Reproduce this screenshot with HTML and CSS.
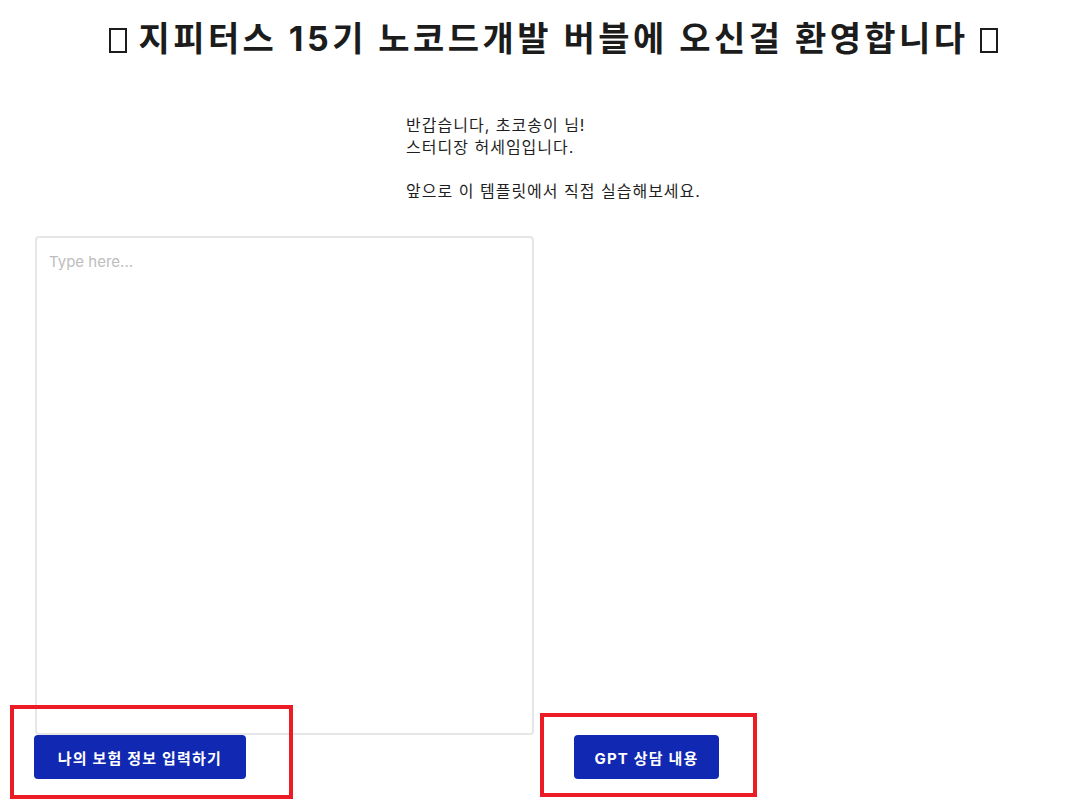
FILE: index.html
```html
<!DOCTYPE html>
<html lang="ko">
<head>
<meta charset="utf-8">
<link rel="stylesheet" href="styles.css">
</head>
<body>
<div class="page">
  <h1 class="title"><span class="tofu"></span> 지피터스 15기 노코드개발 버블에 오신걸 환영합니다 <span class="tofu"></span></h1>
  <div class="intro">
    <p>반갑습니다, 초코송이 님!<br>스터디장 허세임입니다.<br><br>앞으로 이 템플릿에서 직접 실습해보세요.</p>
  </div>
  <div class="work">
    <div class="left">
      <textarea class="input" placeholder="Type here..."></textarea>
      <div class="btn-wrap">
        <button class="btn">나의 보험 정보 입력하기</button>
        <span class="mark mark-left"></span>
      </div>
    </div>
    <div class="right">
      <div class="btn-wrap">
        <button class="btn btn-gpt">GPT 상담 내용</button>
        <span class="mark mark-right"></span>
      </div>
    </div>
  </div>
</div>
</body>
</html>
```
FILE: styles.css
```css
* { box-sizing: border-box; }
html, body { margin: 0; padding: 0; background: #fff; }
body {
  font-family: "Inter", "Noto Sans CJK KR", sans-serif;
  color: #1f1f1f;
  width: 1065px;
  height: 804px;
  overflow: hidden;
}
.page {
  padding-top: 14px;
}
.title {
  margin: 0 0 0 42px;
  text-align: center;
  font-size: 34px;
  font-weight: 700;
  line-height: 50px;
  color: #1c1c1c;
  letter-spacing: 3.45px;
  white-space: nowrap;
}
.tofu {
  display: inline-block;
  width: 18px;
  height: 25px;
  border: 2px solid #1c1c1c;
  vertical-align: -2px;
}
.intro {
  margin: 50px 0 0 42px;
  display: flex;
  justify-content: center;
}
.intro p {
  margin: 0;
  font-size: 16px;
  line-height: 22px;
  letter-spacing: 1px;
  color: #1f1f1f;
}
.work {
  display: flex;
  padding-left: 34px;
  margin-top: 34px;
  gap: 40px;
}
.left {
  display: flex;
  flex-direction: column;
  width: 500px;
}
.input {
  width: 499px;
  height: 499px;
  margin-left: 1px;
  border: 2px solid #e6e6e6;
  border-radius: 4px;
  padding: 14px 12px;
  font-family: "Inter", "Noto Sans CJK KR", sans-serif;
  font-size: 15px;
  resize: none;
  outline: none;
}
.input::placeholder { color: #bdbdbd; }
.right {
  display: flex;
  flex-direction: column;
  justify-content: flex-end;
}
.btn-wrap {
  position: relative;
  align-self: flex-start;
}
.btn {
  display: block;
  height: 44px;
  width: 212px;
  padding: 0;
  border: none;
  border-radius: 4px;
  background: #1128b2;
  color: #fff;
  font-family: "Inter", "Noto Sans CJK KR", sans-serif;
  font-weight: 700;
  font-size: 15px;
  letter-spacing: 1.2px;
}
.btn-gpt { width: 145px; }
.mark {
  position: absolute;
  border: 4px solid #ec1c27;
}
.mark-left {
  left: -24px;
  top: -30px;
  width: 283px;
  height: 94px;
}
.mark-right {
  left: -34px;
  top: -22px;
  width: 217px;
  height: 84px;
}
```
